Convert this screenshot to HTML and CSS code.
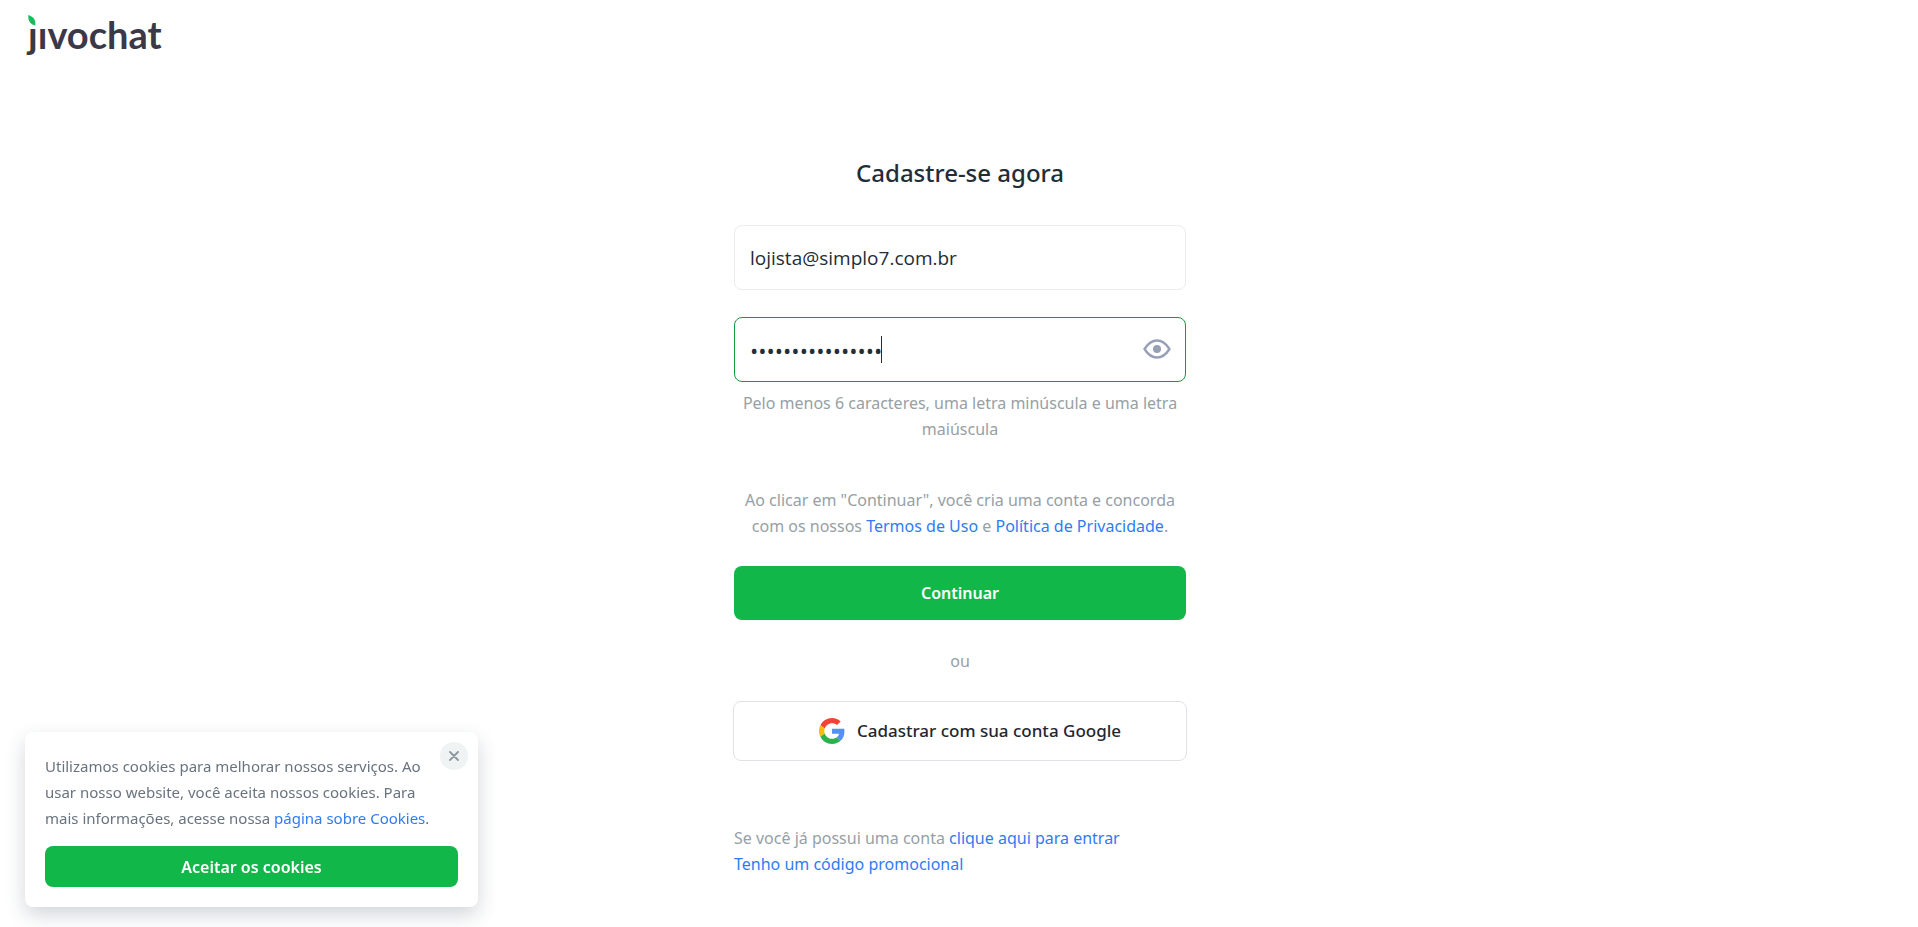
FILE: index.html
```html
<!DOCTYPE html>
<html lang="pt-BR">
<head>
<meta charset="utf-8">
<meta name="viewport" content="width=device-width, initial-scale=1">
<title>Cadastre-se agora</title>
<link rel="stylesheet" href="styles.css">
</head>
<body>
<header class="header">
  <a class="logo" href="#" aria-label="jivochat">
    <span class="logo-text">ȷıvochat</span>
    <svg class="logo-leaf" viewBox="0 0 8 12" aria-hidden="true"><path d="M0 0C6 2 8.500 6 7.500 11.500 1.500 10 -.5 6 0 0Z" fill="#17bd5b"/></svg>
  </a>
</header>
<main class="main">
  <form class="form">
    <h1 class="title">Cadastre-se agora</h1>
    <input class="field" type="email" aria-label="E-mail" value="lojista@simplo7.com.br">
    <div class="password">
      <input class="field field-password" type="password" aria-label="Senha" value="Abcdefghijklmnop" autofocus>
      <span class="caret"></span>
      <button class="eye" type="button" aria-label="Mostrar senha">
        <svg viewBox="0 0 28 20" width="28" height="20" fill="none" aria-hidden="true"><path d="M1.500 10C5 4.500 9 1.500 14 1.500S23 4.500 26.500 10C23 15.500 19 18.500 14 18.500S5 15.500 1.500 10Z" stroke="#98a0b8" stroke-width="2.400" stroke-linejoin="round"/><circle cx="14" cy="10" r="4" fill="#98a0b8"/></svg>
      </button>
    </div>
    <p class="hint">Pelo menos 6 caracteres, uma letra minúscula e uma letra maiúscula</p>
    <p class="terms">Ao clicar em "Continuar", você cria uma conta e concorda com os nossos <a href="#">Termos de Uso</a> e <a href="#">Política de Privacidade</a>.</p>
    <button class="submit" type="button">Continuar</button>
    <p class="or">ou</p>
    <button class="google" type="button">
      <svg viewBox="0 0 48 48" width="26" height="26" aria-hidden="true"><path fill="#f44336" d="M24 9.500c3.540 0 6.710 1.220 9.210 3.600l6.850-6.850C35.900 2.380 30.470 0 24 0 14.620 0 6.510 5.380 2.560 13.220l7.980 6.190C12.430 13.720 17.740 9.500 24 9.500z"/><path fill="#5490f5" d="M46.980 24.550c0-1.570-.15-3.090-.38-4.550H24v9.020h12.940c-.58 2.960-2.260 5.480-4.780 7.180l7.730 6c4.510-4.180 7.090-10.360 7.090-17.650z"/><path fill="#fbbc05" d="M10.530 28.590c-.48-1.450-.76-2.990-.76-4.590s.27-3.140.76-4.590l-7.980-6.190C.92 16.460 0 20.120 0 24s.92 7.540 2.560 10.780l7.970-6.190z"/><path fill="#2bb24c" d="M24 48c6.480 0 11.930-2.130 15.890-5.810l-7.730-6c-2.150 1.450-4.920 2.300-8.160 2.300-6.260 0-11.570-4.220-13.470-9.910l-7.980 6.190C6.510 42.620 14.620 48 24 48z"/></svg>
      <span>Cadastrar com sua conta Google</span>
    </button>
    <div class="links">
      <p>Se você já possui uma conta <a href="#">clique aqui para entrar</a></p>
      <p><a href="#">Tenho um código promocional</a></p>
    </div>
  </form>
</main>
<aside class="cookies" aria-label="Cookies">
  <p class="cookies-text">Utilizamos cookies para melhorar nossos serviços. Ao usar nosso website, você aceita nossos cookies. Para mais informações, acesse nossa <a href="#">página sobre Cookies</a>.</p>
  <button class="accept" type="button">Aceitar os cookies</button>
  <button class="close" type="button" aria-label="Fechar"><svg viewBox="0 0 10 10" width="10" height="10" aria-hidden="true"><path d="M1 1l8 8M9 1L1 9" stroke="#8e979f" stroke-width="1.800" stroke-linecap="round"/></svg></button>
</aside>
</body>
</html>
```

FILE: styles.css
```css
* { box-sizing: border-box; }
body {
  margin: 0;
  background: #fff;
  color: #222d38;
  font: 16px/26px "Noto Sans", "Open Sans", sans-serif;
}
h1, p { margin: 0; }
a { color: #2f7bf6; text-decoration: none; }
button { font: inherit; border: 0; padding: 0; cursor: pointer; }
.header { height: 64px; padding: 12px 28px; }
.logo { position: relative; display: inline-block; color: #3b3848; }
.logo-text { font: 700 38px/44px Lato, sans-serif; }
.logo-leaf { position: absolute; left: 0; top: 3px; width: 8px; height: 11px; }
.main { display: flex; justify-content: center; padding: 92px 16px 48px 18px; }
.form { display: flex; flex-direction: column; width: 100%; max-width: 452px; }
.title { font-size: 24px; line-height: 34px; font-weight: 500; text-align: center; margin-bottom: 35px; }
.field {
  width: 100%;
  height: 65px;
  padding: 0 15px;
  border: 1px solid #ebecee;
  border-radius: 8px;
  background: #fff;
  color: #222d38;
  font: 19px/27px "Open Sans", "Noto Sans", sans-serif;
  outline: 0;
}
.password { position: relative; margin-top: 27px; }
.field-password { display: block; padding-right: 56px; border-color: #109c41; font-size: 22px; caret-color: transparent; }
.caret { position: absolute; left: 147px; top: 19px; width: 1px; height: 27px; background: #222d38; }
.eye { position: absolute; right: 15px; top: 22px; width: 28px; height: 20px; background: none; }
.eye svg { display: block; }
.hint, .terms, .or { color: #96a0a5; text-align: center; }
.hint { margin-top: 8px; }
.terms { margin-top: 45px; }
.submit { height: 54px; margin-top: 27px; border-radius: 8px; background: #12b74a; color: #fff; font-weight: 600; }
.or { margin-top: 28px; }
.google {
  display: flex;
  align-items: center;
  justify-content: center;
  gap: 12px;
  height: 60px;
  margin: 27px -1px 0;
  padding-left: 20px;
  border: 1px solid #e1e2e8;
  border-radius: 8px;
  background: #fff;
  color: #1f2730;
  font-size: 17px;
  font-weight: 500;
}
.links { margin-top: 64px; color: #96a0a5; }
.cookies {
  position: fixed;
  left: 25px;
  bottom: 20px;
  width: 453px;
  max-width: calc(100% - 50px);
  padding: 21px 20px 20px;
  border-radius: 8px;
  background: #fff;
  box-shadow: 0 8px 20px rgba(30, 50, 70, 0.2);
}
.cookies-text { font-size: 15px; line-height: 26px; color: #69737f; padding-right: 16px; }
.accept { display: block; width: 100%; height: 41px; margin-top: 15px; border-radius: 8px; background: #12b74a; color: #fff; font-weight: 600; }
.close {
  position: absolute;
  right: 10px;
  top: 10px;
  display: flex;
  align-items: center;
  justify-content: center;
  width: 28px;
  height: 28px;
  border-radius: 50%;
  background: #eff3f4;
}
```
